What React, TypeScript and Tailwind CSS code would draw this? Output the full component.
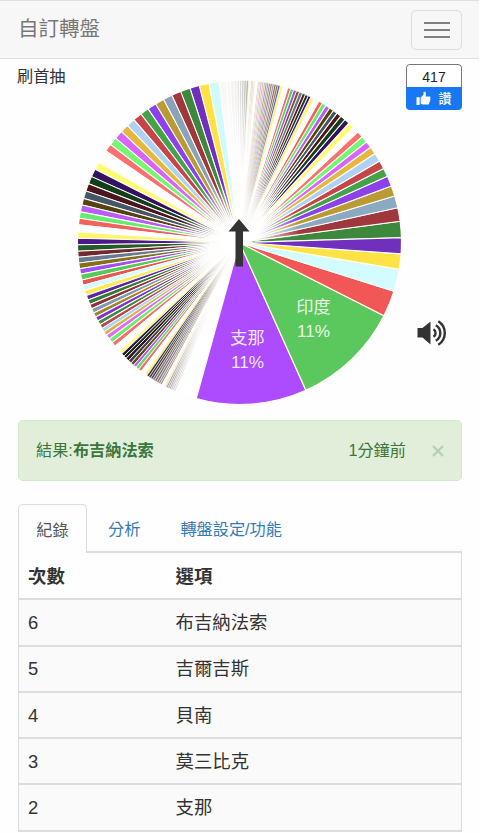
import { useMemo } from "react"

type Slice = { color: string; from: number; to: number }

const CX = 161.5
const CY = 162.5
const R = 162

// [color, end angle], walking counterclockwise from START. 0 is twelve o'clock.
const START = 195.5
const EDGES: [string, number][] = [
  ["#ad4cff", 155.8],
  ["#5ac85d", 116.9],
  ["#f25757", 107.5],
  ["#d2fcff", 99.5],
  ["#ffe345", 94],
  ["#7030bd", 88.3],
  ["#3d883c", 82.5],
  ["#a0373d", 77.6],
  ["#8ba9c0", 73.3],
  ["#b99a33", 69.6],
  ["#8d41e8", 65.9],
  ["#44a248", 62.8],
  ["#c5454b", 59.8],
  ["#b0d2f2", 56.7],
  ["#e5b73f", 54],
  ["#dc63fa", 51.6],
  ["#75f774", 49.2],
  ["#fb7070", 46.9],
  ["#ffffff", 44.7],
  ["#fffb75", 42.5],
  ["#331260", 40.6],
  ["#143d1a", 38.7],
  ["#4a151c", 37],
  ["#455666", 35.4],
  ["#54430f", 33.8],
  ["#bd5bf8", 32.2],
  ["#64ec6c", 30.7],
  ["#f3615f", 29.3],
  ["#ffffff", 27.4],
  ["#fff56d", 26.1],
  ["#3d1872", 25.1],
  ["#1f3d23", 24],
  ["#581e24", 22.9],
  ["#667787", 21.7],
  ["#6f5b29", 20.6],
  ["#a053dc", 19.5],
  ["#5acb61", 18.4],
  ["#ec706c", 17.3],
  ["#ffffff", 15.6],
  ["#fff27d", 14.5],
  ["#63468f", 13.8],
  ["#587958", 13.1],
  ["#9e5559", 12.4],
  ["#8997a6", 11.7],
  ["#9a834e", 11],
  ["#9a6bce", 10.4],
  ["#79a879", 9.8],
  ["#c9787a", 9.2],
  ["#a6bacb", 8.6],
  ["#d6ba8a", 8],
  ["#d7a3dd", 7.4],
  ["#bcd7b9", 6.9],
  ["#e9b4ad", 6.4],
  ["#ffffff", 5.5],
  ["#eee3bd", 5],
  ["#cfc8cc", 4.5],
  ["#d6cfc9", 4],
  ["#fffce0", 3.2],
  ["#b5b2ab", 2.4],
  ["#c2c2be", 1.6],
  ["#d2d2d0", 0.8],
  ["#dddddd", 0],
  ["#e8e8e8", -1],
  ["#eeeeee", -2],
  ["#f3f3f3", -3.3],
  ["#f7f7f7", -4.6],
  ["#fbf7f8", -7.3],
  ["#cffaff", -10.9],
  ["#ffe345", -14.4],
  ["#7030bd", -17.8],
  ["#3d883c", -21.3],
  ["#a0373d", -24.7],
  ["#8ba3b8", -28],
  ["#b99a33", -31.2],
  ["#8d41e8", -34.4],
  ["#44a248", -37.5],
  ["#c5454b", -40.7],
  ["#b0d2f2", -43.8],
  ["#e5b73f", -46.8],
  ["#dc63fa", -49.9],
  ["#75f774", -52.8],
  ["#fb7070", -55.6],
  ["#ffffff", -60.3],
  ["#fffb75", -63.1],
  ["#331260", -66],
  ["#143d1a", -68.7],
  ["#4a151c", -71.5],
  ["#455666", -74.2],
  ["#54430f", -76.6],
  ["#bd5bf8", -79.1],
  ["#64ec6c", -81.4],
  ["#f3615f", -83.7],
  ["#ffffff", -86.3],
  ["#fff766", -88.5],
  ["#4b1a8a", -90.8],
  ["#235c27", -93.1],
  ["#722a30", -95.2],
  ["#667b90", -97.3],
  ["#82701f", -99.3],
  ["#a34ef2", -101.3],
  ["#55c95c", -103.4],
  ["#ea5552", -105.3],
  ["#d8fbff", -107.2],
  ["#ffe94f", -109.1],
  ["#5b26a1", -110.8],
  ["#337a35", -112.5],
  ["#8b333a", -114.1],
  ["#8298aa", -115.8],
  ["#9e8630", -117.4],
  ["#7e35cc", -119],
  ["#3d8b40", -120.5],
  ["#b7484b", -122],
  ["#acd6ee", -123.4],
  ["#dfae4b", -124.8],
  ["#dc70ef", -126.5],
  ["#6cea70", -128.2],
  ["#f2706c", -129.8],
  ["#ffffff", -132.2],
  ["#fffa80", -133.4],
  ["#2b174b", -134.5],
  ["#182b18", -135.6],
  ["#2f151a", -136.8],
  ["#3c3f48", -138],
  ["#604728", -139.2],
  ["#b360e5", -140.3],
  ["#65db6c", -141.5],
  ["#ee7370", -142.7],
  ["#ffffff", -144.3],
  ["#fff17c", -145.2],
  ["#3b2c50", -146],
  ["#3a463a", -146.8],
  ["#5a3b3e", -147.6],
  ["#6a727b", -148.4],
  ["#817258", -149.2],
  ["#8e6ca7", -150],
  ["#79a079", -150.7],
  ["#bd8583", -151.4],
  ["#ffffff", -152.4],
  ["#f6e9b0", -153.1],
  ["#99909f", -153.7],
  ["#a3aaa3", -154.3],
  ["#b3a3a5", -154.9],
  ["#c3c5c8", -155.5],
  ["#d3cfc6", -156.1],
  ["#e3dde6", -156.8],
  ["#ffffff", -164.5],
]

function point(angle: number, radius: number) {
  const rad = (angle * Math.PI) / 180
  return `${(CX + radius * Math.sin(rad)).toFixed(2)} ${(CY - radius * Math.cos(rad)).toFixed(2)}`
}

function slicePath({ from, to }: Slice) {
  const large = from - to > 180 ? 1 : 0
  return `M${CX} ${CY}L${point(from, R)}A${R} ${R} 0 ${large} 0 ${point(to, R)}Z`
}

// thin slices get a thinner border, otherwise nothing of their color is left
function borderWidth({ from, to }: Slice) {
  const width = from - to
  if (width < 0.9) return 0.55
  if (width < 1.5) return 0.8
  return 1.05
}

function Wheel() {
  const slices = useMemo(
    () => EDGES.map(([color, to], i) => ({ color, from: i === 0 ? START : EDGES[i - 1][1], to })),
    []
  )

  return (
    <svg width="324" height="325" viewBox="0 0 324 325" className="mt-[21px] block shrink-0">
      <defs>
        <radialGradient id="hub" gradientUnits="userSpaceOnUse" cx={CX} cy={CY} r="62">
          <stop offset="0.2" stopColor="#fff" />
          <stop offset="1" stopColor="#fff" stopOpacity="0" />
        </radialGradient>
        <radialGradient id="fade" gradientUnits="userSpaceOnUse" cx={CX} cy={CY} r="150">
          <stop offset="0.45" stopColor="#fff" />
          <stop offset="1" stopColor="#fff" stopOpacity="0" />
        </radialGradient>
      </defs>
      {slices.slice(6).map((slice) => (
        <path
          key={slice.to}
          d={slicePath(slice)}
          fill={slice.color}
          stroke="#fffefa"
          strokeWidth={borderWidth(slice)}
        />
      ))}
      <path d={slicePath({ color: "", from: 84, to: -164.5 })} fill="url(#hub)" />
      <path d={slicePath({ color: "", from: 5.5, to: -7.3 })} fill="url(#fade)" />
      <path d={slicePath({ color: "", from: -152.4, to: -164.5 })} fill="url(#fade)" />
      {slices.slice(0, 6).map((slice) => (
        <path key={slice.to} d={slicePath(slice)} fill={slice.color} stroke="#fffdf6" strokeWidth="1.2" />
      ))}
      <g fill="#fff" fillOpacity="0.88" fontSize="17.2" textAnchor="middle">
        <text x="169.5" y="264">支那</text>
        <text x="169.5" y="288">11%</text>
        <text x="235.5" y="233">印度</text>
        <text x="235.5" y="257">11%</text>
      </g>
      <path d="M161 139L171.5 151.5H165V186.5H157.5V151.5H150.5Z" fill="#333" />
    </svg>
  )
}

function LikeBox() {
  return (
    <div className="mt-[5px] h-[46px] w-14 overflow-hidden rounded-[4px] text-center">
      <div className="h-[23px] rounded-t-[4px] border border-b-0 border-[#777] bg-white text-[14px] leading-[24px] text-[#222]">
        417
      </div>
      <div className="flex h-[23px] items-center justify-center gap-[7px] bg-[#1877f2] text-[13px] font-medium text-white">
        <svg width="15" height="15" viewBox="0 0 15 15" fill="currentColor">
          <path d="M0.5 6.2H3.7V14H0.5ZM4.7 6.6L7.5 3.7V1.6C7.5 0.2 10.1 0.3 10.1 2.8C10.1 3.9 9.7 4.8 9.5 5.4H13.2C14.8 5.4 14.9 7.2 14 7.7C14.8 8.2 14.6 9.5 13.7 9.8C14.2 10.5 13.9 11.5 13.1 11.7C13.5 12.7 12.8 13.6 11.8 13.6H7.8C6.4 13.6 5.8 12.9 4.7 12.8Z" />
        </svg>
        讚
      </div>
    </div>
  )
}

function VolumeIcon() {
  return (
    <svg width="32" height="28" viewBox="0 0 32 28" fill="none" stroke="#333" strokeWidth="2.4">
      <path d="M0.5 9H5.5L13.5 2.5V25.5L5.5 18.5H0.5Z" fill="#333" stroke="none" />
      <path d="M16.5 10.2A4.5 4.5 0 0 1 16.5 17.8" />
      <path d="M18.8 6.2A9 9 0 0 1 18.8 21.8" />
      <path d="M21.3 2.2A14 14 0 0 1 21.3 25.8" />
    </svg>
  )
}

const records = [
  { count: 6, name: "布吉納法索" },
  { count: 5, name: "吉爾吉斯" },
  { count: 4, name: "貝南" },
  { count: 3, name: "莫三比克" },
  { count: 2, name: "支那" },
]

export default function App() {
  return (
    <div className="h-[833px] w-[480px] overflow-hidden bg-[#fefefe] font-['Liberation_Sans','Noto_Sans_CJK_TC',sans-serif] text-[#333]">
      <nav className="flex h-[59px] w-[479px] items-center justify-between border-y border-[#dfdfdf] bg-[#f7f7f7] pr-[17px] pl-[18px]">
        <span className="text-[20.5px] text-[#777]">自訂轉盤</span>
        <button className="flex h-10 w-[51px] flex-col items-center justify-center gap-[5px] rounded-[5px] border border-[#ddd]">
          <span className="h-[2px] w-[26px] bg-[#808080]" />
          <span className="h-[2px] w-[26px] bg-[#808080]" />
          <span className="h-[2px] w-[26px] bg-[#808080]" />
        </button>
      </nav>

      <section className="flex h-[361px] pl-[17px]">
        <div className="mt-[5px] w-[61px] shrink-0 text-[16.2px] leading-[24px] whitespace-nowrap">刷首抽</div>
        <Wheel />
        <div className="flex w-[60px] flex-col items-end">
          <LikeBox />
          <button className="mt-[209px] mr-[13px]">
            <VolumeIcon />
          </button>
        </div>
      </section>

      <main className="ml-[18px] w-[444px]">
        <div className="flex h-[61px] items-center rounded-[5px] border border-[#cfeac8] bg-[#e1efda] px-[17px] text-[16.2px] text-[#3c763d]">
          <span>
            結果:<b>布吉納法索</b>
          </span>
          <span className="ml-auto">1分鐘前</span>
          <button className="ml-[26px] text-[#b8cfb5]">
            <svg width="12" height="12" viewBox="0 0 12 12" fill="none" stroke="currentColor" strokeWidth="2.4">
              <path d="M1 1L11 11M11 1L1 11" />
            </svg>
          </button>
        </div>

        <div className="mt-[23px] flex h-[49px] text-[16.2px] leading-[50px] text-[#337ab7]">
          <div className="w-[69px] rounded-t-[5px] border border-b-0 border-[#ddd] bg-[#fefefe] text-center text-[#555]">
            紀錄
          </div>
          <div className="flex flex-1 gap-[40px] border-b-2 border-[#ddd] pl-[21px]">
            <span>分析</span>
            <span>轉盤設定/功能</span>
          </div>
        </div>

        <table className="w-full border-collapse border-x border-[#ddd] text-left text-[18.4px]">
          <thead>
            <tr className="h-[46.3px] border-b-[2px] border-[#ddd]">
              <th className="w-[148px] pt-[2px] pl-[9px]">次數</th>
              <th className="pt-[2px] pl-[9px]">選項</th>
            </tr>
          </thead>
          <tbody>
            {records.map((record) => (
              <tr key={record.count} className="h-[46.3px] border-b-[2px] border-[#ddd] bg-[#fafafa]">
                <td className="pt-[1px] pl-[9px]">{record.count}</td>
                <td className="pt-[1px] pl-[9px]">{record.name}</td>
              </tr>
            ))}
          </tbody>
        </table>
      </main>
    </div>
  )
}
